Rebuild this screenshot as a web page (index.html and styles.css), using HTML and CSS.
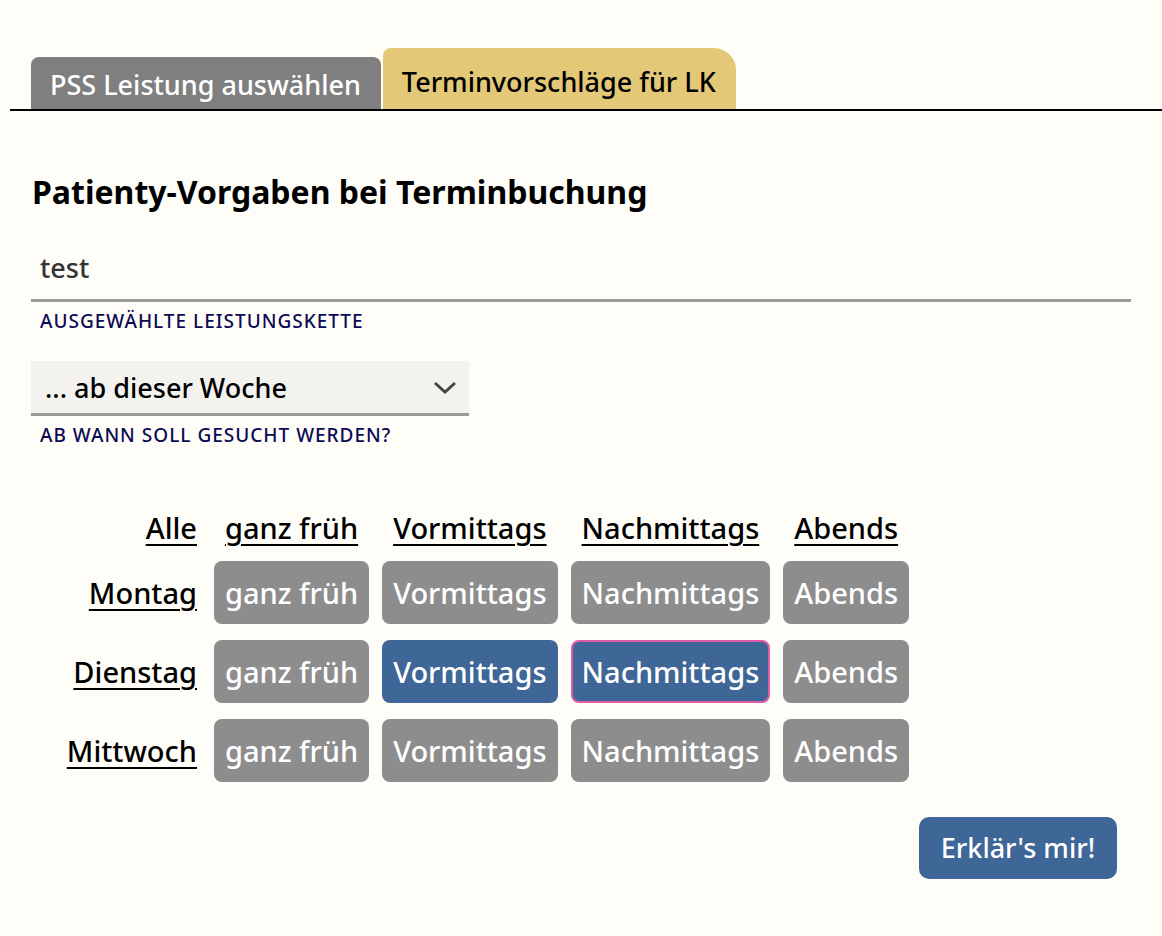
FILE: index.html
```html
<!DOCTYPE html>
<html>
    <head>
        <title>Terminvorschläge</title>
        <link rel="stylesheet" href="styles.css">
    </head>
<body>
    <div class="seite">
        <div class="tabs">
            <div class="tab tab-aus">PSS Leistung auswählen</div>
            <div class="tab tab-an">Terminvorschläge für LK</div>
        </div>

        <div class="inhalt">
            <h2>Patienty-Vorgaben bei Terminbuchung</h2>

            <div class="feld">
                <div class="eingabe">test</div>
                <div class="label">Ausgewählte Leistungskette</div>
            </div>

            <div class="feld feld-klein">
                <div class="auswahl">
                    <span>... ab dieser Woche</span>
                    <svg width="24" height="14" viewBox="0 0 24 14">
                        <path d="M2 2 L12 11 L22 2" fill="none" stroke="#444" stroke-width="3"/>
                    </svg>
                </div>
                <div class="label">Ab wann soll gesucht werden?</div>
            </div>

            <div class="raster">
                <a class="kopf tag">Alle</a>
                <a class="kopf">ganz früh</a>
                <a class="kopf">Vormittags</a>
                <a class="kopf">Nachmittags</a>
                <a class="kopf">Abends</a>

                <a class="tag">Montag</a>
                <div class="btn">ganz früh</div>
                <div class="btn">Vormittags</div>
                <div class="btn">Nachmittags</div>
                <div class="btn">Abends</div>

                <a class="tag">Dienstag</a>
                <div class="btn">ganz früh</div>
                <div class="btn an">Vormittags</div>
                <div class="btn an fokus">Nachmittags</div>
                <div class="btn">Abends</div>

                <a class="tag">Mittwoch</a>
                <div class="btn">ganz früh</div>
                <div class="btn">Vormittags</div>
                <div class="btn">Nachmittags</div>
                <div class="btn">Abends</div>
            </div>

            <div class="unten">
                <div class="btn-erklaer">Erklär's mir!</div>
            </div>
        </div>
    </div>
</body>
</html>
```
FILE: styles.css
```css
body{
    margin: 0;
    background: #fffdf8;
    font-family: "Noto Sans", sans-serif;
    font-weight: 500;
    color: #000;
}
.seite{
    padding: 48px 0 0 10px;
}
.tabs{
    display: flex;
    align-items: flex-end;
    gap: 2px;
    padding-left: 21px;
    border-bottom: 2px solid #000;
}
.tab{
    font-size: 27px;
    line-height: 30px;
    padding: 13px 20px 9px 19px;
}
.tab-aus{
    background: #7f7f7f;
    color: #fff;
    border-radius: 8px 8px 0 0;
}
.tab-an{
    background: #e3c878;
    color: #000;
    padding-top: 19px;
    padding-bottom: 12px;
    border-radius: 8px 22px 0 0;
}
.inhalt{
    padding: 0 31px 40px 21px;
}
h2{
    font-size: 32px;
    font-weight: 700;
    margin: 61px 0 0 1px;
    line-height: 40px;
}
.feld{
    margin-top: 30px;
}
.eingabe{
    font-size: 27px;
    color: #333;
    padding: 8px 9px 13px 9px;
    line-height: 36px;
    border-bottom: 3px solid #9c9c9c;
}
.label{
    font-size: 19px;
    letter-spacing: 1px;
    color: #0a0a55;
    text-transform: uppercase;
    padding-left: 9px;
    margin-top: 6px;
}
.feld-klein{
    width: 438px;
    margin-top: 27px;
}
.auswahl{
    display: flex;
    justify-content: space-between;
    align-items: center;
    background: #f3f2ef;
    font-size: 27px;
    line-height: 36px;
    padding: 9px 12px 7px 14px;
    border-bottom: 3px solid #9c9c9c;
}
.raster{
    display: grid;
    grid-template-columns: 140px repeat(4, auto);
    justify-content: start;
    column-gap: 13px;
    row-gap: 16px;
    margin: 63px 0 0 30px;
    font-size: 29px;
}
.raster a{
    color: #000;
    text-decoration: underline;
    text-underline-offset: 5px;
    text-decoration-thickness: 2px;
}
.kopf{
    text-align: center;
    line-height: 34px;
}
.tag{
    text-align: right;
    align-self: center;
    margin-right: 4px;
}
.btn{
    background: #8e8d8e;
    color: #fff;
    border-radius: 8px;
    padding: 0 9px;
    line-height: 59px;
    text-align: center;
    border: 2px solid transparent;
}
.btn.an{
    background: #3e6696;
}
.btn.fokus{
    border-color: #e05aa8;
}
.unten{
    display: flex;
    justify-content: flex-end;
    margin-top: 35px;
    padding-right: 14px;
}
.btn-erklaer{
    background: #3e6696;
    color: #fff;
    font-size: 27px;
    line-height: 62px;
    padding: 0 22px;
    border-radius: 10px;
}
```
